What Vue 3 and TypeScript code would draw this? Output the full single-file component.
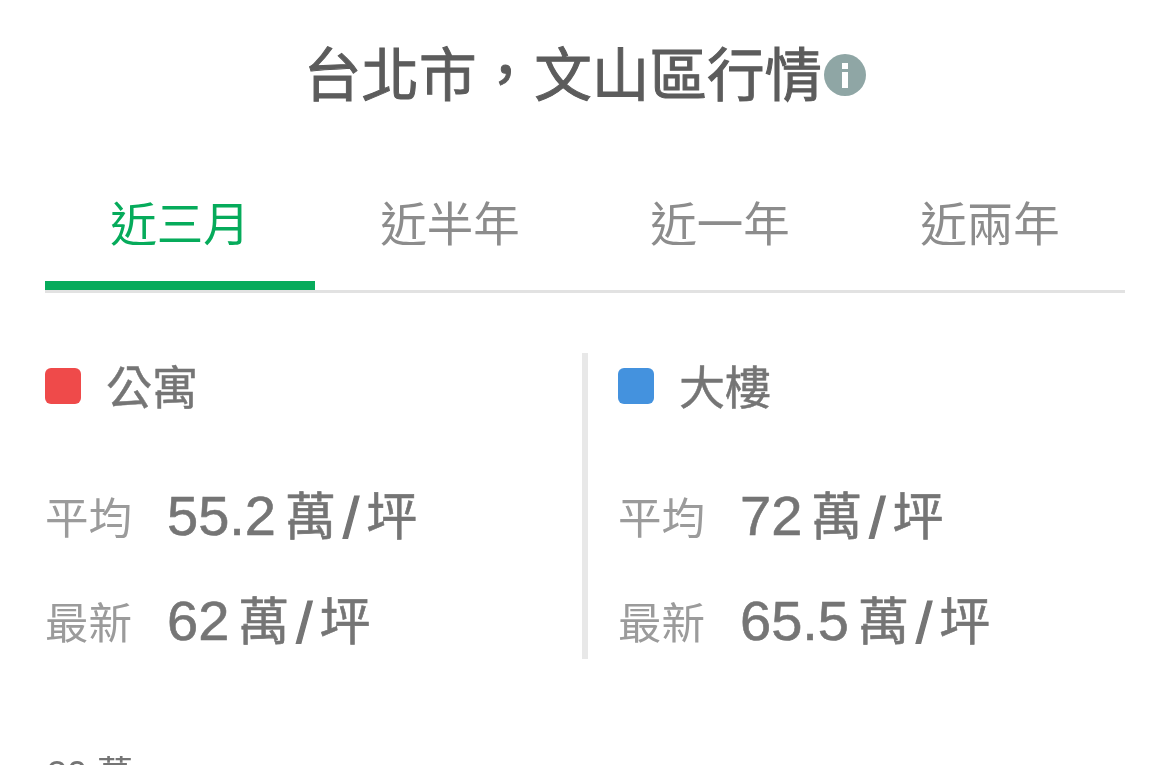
<template>
  <div class="page">
    <h1 class="title">
      <span>台北市，文山區行情</span>
      <svg class="info" viewBox="0 0 42 42" aria-hidden="true">
        <circle cx="21" cy="21" r="21" fill="#8fa6a5" />
        <rect x="18" y="9" width="6" height="6" fill="#fff" />
        <rect x="18" y="18" width="6" height="16" fill="#fff" />
      </svg>
    </h1>

    <div class="tabs">
      <div v-for="(tab, i) in tabs" :key="tab" class="tab" :class="{ active: i === 0 }">{{ tab }}</div>
    </div>

    <div class="compare">
      <div v-for="item in items" :key="item.name" class="column">
        <div class="legend">
          <span class="swatch" :style="{ background: item.color }"></span>
          <span class="name">{{ item.name }}</span>
        </div>
        <div class="row first">
          <span class="label">平均</span>
          <span class="value"><span class="num">{{ item.avg }}</span><span class="unit">萬</span><span class="slash">/</span>坪</span>
        </div>
        <div class="row">
          <span class="label">最新</span>
          <span class="value"><span class="num">{{ item.latest }}</span><span class="unit">萬</span><span class="slash">/</span>坪</span>
        </div>
      </div>
    </div>

    <div class="axis">30 萬</div>
  </div>
</template>

<script setup lang="ts">
const tabs = ['近三月', '近半年', '近一年', '近兩年']

const items = [
  { name: '公寓', color: '#ef4a4a', avg: '55.2', latest: '62' },
  { name: '大樓', color: '#4492de', avg: '72', latest: '65.5' }
]
</script>

<style>
html,
body {
  background: #fff;
  overflow: hidden;
}
</style>

<style scoped>
.page {
  height: 765px;
  overflow: hidden;
  padding: 0 45px;
  box-sizing: border-box;
  font-family: "Liberation Sans", "Noto Sans CJK TC", sans-serif;
  will-change: transform;
}

.title {
  display: flex;
  justify-content: center;
  align-items: center;
  gap: 3px;
  height: 150px;
  margin: 0;
  font-size: 57.6px;
  font-weight: 400;
  -webkit-text-stroke: 1px #5c5c5c;
  color: #5c5c5c;
  line-height: 1;
}

.title span {
  margin-top: 3px;
}

.info {
  width: 42px;
  height: 42px;
  flex-shrink: 0;
  margin-left: -1px;
}

.tabs {
  display: flex;
  margin-top: 12px;
  border-bottom: 3px solid #e2e2e2;
}

.tab {
  flex: 1;
  height: 128px;
  box-sizing: border-box;
  text-align: center;
  font-size: 46.5px;
  line-height: 126px;
  color: #8c8c8c;
}

.tab.active {
  color: #06ab5b;
  border-bottom: 9px solid #06ab5b;
}

.compare {
  display: grid;
  grid-template-columns: 543px 1fr;
  margin-top: 60px;
}

.column {
  height: 306px;
}

.column:first-child {
  border-right: 6px solid #e8e8e8;
}

.column:last-child {
  padding-left: 30px;
}

.legend {
  display: flex;
  align-items: center;
  gap: 25px;
  height: 66px;
}

.swatch {
  width: 36px;
  height: 36px;
  border-radius: 6px;
}

.name {
  margin-bottom: 4px;
  font-size: 46px;
  color: #757575;
  -webkit-text-stroke: 0.5px #757575;
}

.row {
  display: flex;
  align-items: center;
  height: 60px;
  margin-top: 45px;
}

.row.first {
  margin-top: 66px;
}

.label {
  width: 122px;
  font-size: 43.5px;
  color: #9b9b9b;
}

.value {
  margin-bottom: 4px;
  font-size: 51px;
  color: #757575;
  white-space: nowrap;
  -webkit-text-stroke: 0.6px #757575;
}

.num {
  font-size: 56px;
}

.unit {
  margin-left: 9px;
}

.slash {
  margin: 0 7px;
  font-size: 58px;
  vertical-align: -3px;
  -webkit-text-stroke: 1.2px #757575;
}

.axis {
  margin-top: 96px;
  padding-left: 2px;
  font-size: 36px;
  color: #757575;
  line-height: 40px;
}
</style>
